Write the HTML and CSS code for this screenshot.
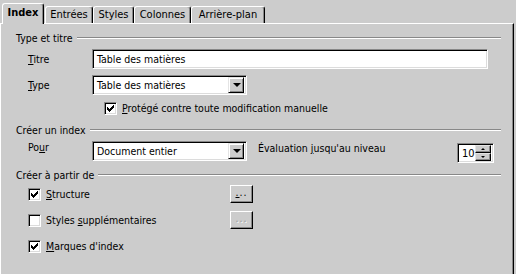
FILE: index.html
```html
<!DOCTYPE html>
<html lang="fr">
<head>
<meta charset="utf-8">
<title>Index</title>
<link rel="stylesheet" href="styles.css">
</head>
<body>
<div class="tabs">
  <div class="tab tab-index active">Index</div>
  <div class="tab tab-entrees">Entrées</div>
  <div class="tab tab-styles">Styles</div>
  <div class="tab tab-colonnes">Colonnes</div>
  <div class="tab tab-arriere">Arrière-plan</div>
</div>
<div class="panel">
  <div class="group-head head-1"><span>Type et titre</span><span class="sep"></span></div>
  <div class="row row-titre">
    <span class="lbl"><u>T</u>itre</span>
    <div class="field input-title">Table des matières</div>
  </div>
  <div class="row row-type">
    <span class="lbl"><u>T</u>ype</span>
    <div class="field combo"><span class="val">Table des matières</span><span class="drop"><span class="tri"></span></span></div>
  </div>
  <div class="row row-protect">
    <span class="cb checked"><svg width="7" height="7" viewBox="0 0 7 7" shape-rendering="crispEdges"><path d="M0 2h1v3H0zM1 3h1v3H1zM2 4h1v3H2zM3 3h1v3H3zM4 2h1v3H4zM5 1h1v3H5zM6 0h1v3H6z" fill="#000"/></svg></span>
    <span class="cb-text"><u>P</u>rotégé contre toute modification manuelle</span>
  </div>

  <div class="group-head head-2"><span>Créer un index</span><span class="sep"></span></div>
  <div class="row row-pour">
    <span class="lbl">Po<u>u</u>r</span>
    <div class="field combo"><span class="val">Document entier</span><span class="drop"><span class="tri"></span></span></div>
    <span class="eval">Évaluation <u>j</u>usqu'au niveau</span>
    <div class="field spin">
      <span class="spin-val">10</span>
      <span class="spin-btns">
        <span class="spin-btn"><span class="tri-up"></span></span>
        <span class="spin-btn"><span class="tri-down"></span></span>
      </span>
    </div>
  </div>

  <div class="group-head head-3"><span>Créer à partir de</span><span class="sep"></span></div>
  <div class="row row-src row-structure">
    <span class="cb checked"><svg width="7" height="7" viewBox="0 0 7 7" shape-rendering="crispEdges"><path d="M0 2h1v3H0zM1 3h1v3H1zM2 4h1v3H2zM3 3h1v3H3zM4 2h1v3H4zM5 1h1v3H5zM6 0h1v3H6z" fill="#000"/></svg></span>
    <span class="cb-text src-text"><u>S</u>tructure</span>
    <span class="btn"><span class="dots"><u>.</u>..</span></span>
  </div>
  <div class="row row-src row-styles">
    <span class="cb"></span>
    <span class="cb-text src-text">Styles <u>s</u>upplémentaires</span>
    <span class="btn disabled"><span class="dots">...</span></span>
  </div>
  <div class="row row-src row-marques">
    <span class="cb checked"><svg width="7" height="7" viewBox="0 0 7 7" shape-rendering="crispEdges"><path d="M0 2h1v3H0zM1 3h1v3H1zM2 4h1v3H2zM3 3h1v3H3zM4 2h1v3H4zM5 1h1v3H5zM6 0h1v3H6z" fill="#000"/></svg></span>
    <span class="cb-text src-text"><u>M</u>arques d'index</span>
  </div>
</div>
</body>
</html>
```
FILE: styles.css
```css
* { box-sizing: border-box; }

html, body {
  margin: 0;
  padding: 0;
}

body {
  width: 516px;
  height: 274px;
  overflow: hidden;
  background: #cccccc;
  color: #000;
  font-family: "DejaVu Sans Condensed", "DejaVu Sans", "Liberation Sans", sans-serif;
  font-size: 10.5px;
  line-height: 13px;
}

u { text-decoration: underline; text-underline-offset: 1px; }

/* Tabs */
.tabs {
  display: flex;
  align-items: flex-end;
  height: 23px;
  padding-left: 2px;
  position: relative;
  z-index: 1;
}

.tab {
  height: 17px;
  border-top: 1px solid #fff;
  border-left: 1px solid #fff;
  border-right: 1px solid #000;
  box-shadow: inset -1px 0 0 #888;
  border-radius: 3px 3px 0 0;
  text-align: center;
  line-height: 15px;
  white-space: nowrap;
  font-size: 11px;
}

.tab.active {
  height: 21px;
  margin-bottom: -1px;
  font-weight: bold;
  line-height: 18px;
  background: #cccccc;
}

.tab-index { width: 42px; }
.tab-entrees { width: 48px; margin-left: 1px; }
.tab-styles { width: 41px; }
.tab-colonnes { width: 57px; }
.tab-arriere { width: 74px; }

/* Panel */
.panel {
  width: 514px;
  height: 251px;
  border-top: 1px solid #fff;
  border-left: 1px solid #fff;
  border-right: 1px solid #000;
  box-shadow: inset -1px 0 0 #888;
  display: flex;
  flex-direction: column;
}

.group-head {
  display: flex;
  align-items: center;
  height: 14px;
  padding-left: 15px;
  padding-right: 12px;
}

.group-head .sep {
  flex: 1;
  margin-left: 4px;
  height: 2px;
  border-top: 1px solid #888;
  border-bottom: 1px solid #fff;
}

.head-1 { margin-top: 7px; }
.head-2 { margin-top: 8px; }
.head-3 { margin-top: 5px; }

.row {
  display: flex;
  align-items: center;
  padding-left: 27px;
  padding-right: 12px;
}

.lbl { width: 64px; }

.row-titre { margin-top: 4px; height: 20px; }
.row-type { margin-top: 6px; height: 20px; }
.row-protect { margin-top: 6px; height: 14px; padding-left: 103px; }
.row-pour { margin-top: 4px; height: 22px; align-items: flex-start; }
.row-src { height: 18px; }
.row-structure { margin-top: 3px; }
.row-styles { margin-top: 8px; }
.row-marques { margin-top: 8px; }

/* sunken field */
.field {
  height: 20px;
  background: #fff;
  border: 1px solid;
  border-color: #888 #fff #fff #888;
  box-shadow: inset 1px 1px 0 #000, inset -1px -1px 0 #dcdcdc;
  display: flex;
  align-items: center;
  white-space: nowrap;
}

.input-title {
  width: 396px;
  padding-left: 4px;
}

.combo {
  width: 155px;
  padding: 2px 2px 2px 4px;
}

.combo .val { flex: 1; }

.drop {
  width: 16px;
  height: 16px;
  background: #cccccc;
  border: 1px solid;
  border-color: #e4e4e4 #000 #000 #e4e4e4;
  box-shadow: inset 1px 1px 0 #fff, inset -1px -1px 0 #888;
  display: flex;
  align-items: center;
  justify-content: center;
}

.tri {
  width: 0;
  height: 0;
  border-left: 4px solid transparent;
  border-right: 4px solid transparent;
  border-top: 4px solid #000;
  margin-left: 1px;
}

.eval {
  margin-left: 11px;
  margin-top: 1px;
}

.spin {
  margin-left: auto;
  margin-right: 7px;
  margin-top: 2px;
  width: 37px;
  padding: 2px 2px 2px 4px;
}

.spin-val { flex: 1; font-size: 11px; }

.spin-btns {
  display: flex;
  flex-direction: column;
  width: 16px;
  height: 16px;
  flex: none;
}

.spin-btn {
  flex: 1;
  background: #cccccc;
  border: 1px solid;
  border-color: #e4e4e4 #000 #000 #e4e4e4;
  box-shadow: inset -1px -1px 0 #888;
  display: flex;
  align-items: center;
  justify-content: center;
}

.tri-up {
  width: 0; height: 0;
  border-left: 2px solid transparent;
  border-right: 2px solid transparent;
  border-bottom: 2px solid #000;
}

.tri-down {
  width: 0; height: 0;
  border-left: 2px solid transparent;
  border-right: 2px solid transparent;
  border-top: 2px solid #000;
}

/* checkbox */
.cb {
  width: 13px;
  height: 13px;
  flex: none;
  background: #fff;
  border: 1px solid;
  border-color: #888 #fff #fff #888;
  box-shadow: inset 1px 1px 0 #000, inset -1px -1px 0 #dcdcdc;
  display: flex;
  align-items: center;
  justify-content: center;
}

.cb svg { display: block; }

.cb-text { margin-left: 5px; white-space: nowrap; }

.src-text { width: 184px; }

.btn {
  width: 23px;
  height: 18px;
  background: #cccccc;
  border: 1px solid;
  border-color: #fff #000 #000 #fff;
  box-shadow: inset -1px -1px 0 #888;
  display: flex;
  align-items: flex-end;
  justify-content: center;
  padding-bottom: 3px;
  letter-spacing: 1px;
}

.btn.disabled .dots {
  color: #999;
  text-shadow: 1px 1px 0 #fff;
}
```
